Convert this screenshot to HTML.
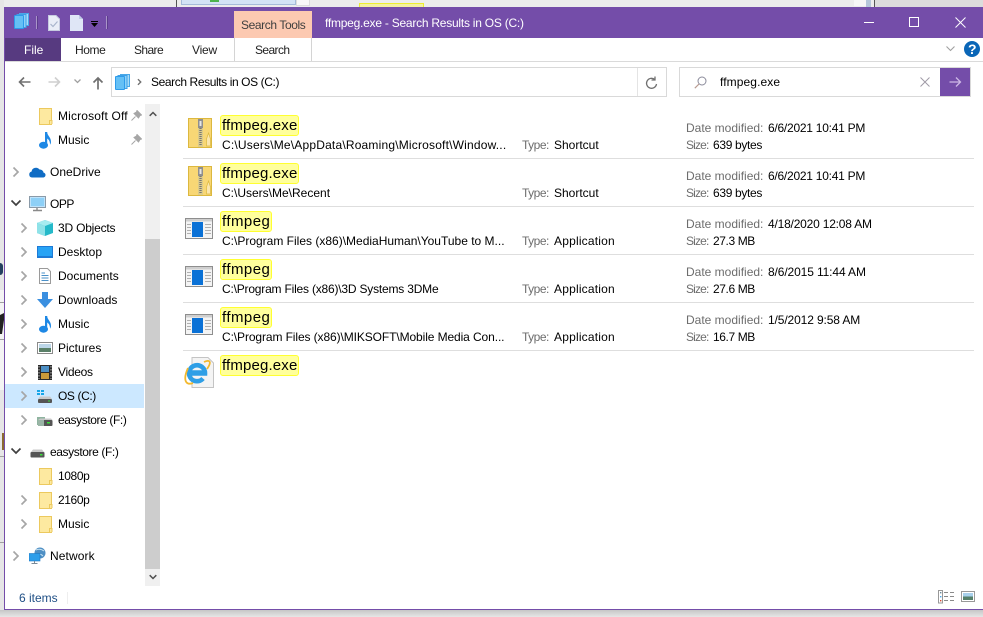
<!DOCTYPE html>
<html><head><meta charset="utf-8"><style>
html,body{margin:0;padding:0}
body{width:983px;height:617px;position:relative;overflow:hidden;background:#fff;font:12px/16px "Liberation Sans",sans-serif;color:#000}
div,span.t,svg{position:absolute}
.t{position:absolute;white-space:nowrap;line-height:16px}
.g{color:#6d6d6d}
.s4{letter-spacing:-.4px}
.s5{letter-spacing:-.5px}
.s2{letter-spacing:-.2px}
.sz{letter-spacing:-.85px}
.hl{position:absolute;left:220px;height:19px;background:#ffff9c;border:1px solid #ffff30;border-radius:3px;box-sizing:content-box}
.n{position:absolute;left:222px;font-size:15px;line-height:20px;white-space:nowrap;letter-spacing:.15px}
.n2{letter-spacing:.45px}
.sep{position:absolute;left:183px;width:791px;height:1px;background:#dedede}
</style></head><body>
<svg width="0" height="0" style="position:absolute"><defs>
<symbol id="ch" viewBox="0 0 8 12"><path d="M1.5 1.5L6 6L1.5 10.5" fill="none" stroke="#a6a6a6" stroke-width="1.7"/></symbol>
<symbol id="dn" viewBox="0 0 12 8"><path d="M1.5 1.5L6 6L10.5 1.5" fill="none" stroke="#404040" stroke-width="1.7"/></symbol>
<symbol id="fo" viewBox="0 0 14 17"><path d="M.5.5H12.5V16.5H.5Z" fill="#fde9a0" stroke="#ecc95e"/><path d="M10.5 16V12.5H13V16" fill="#fde9a0" stroke="#ecc95e"/></symbol>
<symbol id="mu" viewBox="0 0 12 17"><ellipse cx="4.5" cy="13.2" rx="4.5" ry="3.5" fill="#1e88e5"/><path d="M6 0H8.2V13.5H6Z" fill="#1e88e5"/><path d="M8 0C8.5 4 12 5 12 10C12 11 11.6 12 11 12.6C11 9.5 10 7.5 8 6.5Z" fill="#1e88e5"/></symbol>
<symbol id="zip" viewBox="0 0 24 30"><path d="M.5.5H23.5V29.5H.5Z" fill="#f8d775" stroke="#dcb83f"/><path d="M10 1H15V29H10Z" fill="#dccb8a"/><path d="M10 1H15V10H10Z" fill="#8f8f8f"/><path d="M11.5 3H13.5V8H11.5Z" fill="#e6e6e6"/><path d="M12.5 10V28" stroke="#777" stroke-width="2.4" stroke-dasharray="1 1"/><path d="M20.5 15L22.5 21V28H18.5V21Z" fill="#fbe6ae" stroke="#dcb83f" stroke-width=".7"/></symbol>
<symbol id="app" viewBox="0 0 28 22"><rect x=".5" y=".5" width="27" height="20" fill="#f4f4f4" stroke="#8e8e8e"/><rect x="1" y="1" width="26" height="2.5" fill="#cfcfcf"/><rect x="7" y="4" width="11" height="15" fill="#0a71d6"/><path d="M2 6.5H6M2 9.5H6M2 12.5H6M2 15.5H6M20 6.5H26M20 9.5H26M20 12.5H26M20 15.5H26" stroke="#b0b0b0"/></symbol>
<symbol id="stack" viewBox="0 0 15 16"><rect x="5.5" y=".5" width="9" height="12" fill="#a6dcf9" stroke="#4aa8e8"/><rect x="3" y="1.5" width="9" height="13" fill="#8ed2f8" stroke="#3ea0e6"/><rect x=".5" y="2.5" width="9" height="13" rx=".5" fill="#65c0f5" stroke="#2e9bea"/></symbol>
</defs></svg>

<!-- background strip -->
<div style="left:0;top:0;width:983px;height:7px;background:#ececec"></div>
<div style="left:176px;top:0;width:1px;height:7px;background:#555"></div>
<div style="left:181px;top:0;width:115px;height:5px;background:#d3e3f5;border:1px solid #a5bcd9;border-top:0;box-sizing:border-box"></div>
<div style="left:210px;top:0;width:9px;height:2px;background:#4db34d"></div>
<div style="left:296px;top:0;width:14px;height:6px;background:#f8f8f8;border:1px solid #ddd;border-top:0;box-sizing:border-box"></div>
<div style="left:359px;top:3px;width:65px;height:4px;background:#f3f0a0;border:1px solid #ecec30;border-bottom:0;box-sizing:border-box"></div>
<div style="left:854px;top:0;width:12px;height:6px;background:#f6f6f6"></div>
<div style="left:866px;top:0;width:5px;height:7px;background:#b5c6da"></div>
<div style="left:874px;top:0;width:1px;height:7px;background:#555"></div>
<div style="left:875px;top:0;width:108px;height:7px;background:#dcdcdc"></div>
<div style="left:0;top:0;width:4px;height:617px;background:#e6e6e6"></div>
<div style="left:0;top:290px;width:4px;height:100px;background:#f4f4f4"></div>
<div style="left:0;top:302px;width:4px;height:1px;background:#a0a0a0"></div>
<div style="left:0;top:339px;width:4px;height:1px;background:#a0a0a0"></div>
<div style="left:0;top:456px;width:4px;height:1px;background:#a0a0a0"></div>
<div style="left:0;top:542px;width:4px;height:1px;background:#a0a0a0"></div>
<div style="left:0;top:263px;width:3px;height:12px;background:#24405f;border-radius:0 4px 4px 0"></div>
<svg style="left:0;top:313px" width="4" height="22" viewBox="0 0 4 22"><path d="M0 2L4 0V7L2 21H0Z" fill="#222"/></svg>
<div style="left:2px;top:433px;width:2px;height:17px;background:#8a6a30"></div>
<div style="left:0;top:610px;width:983px;height:7px;background:linear-gradient(#c6c6c6,#e6e6e6)"></div>

<!-- window -->
<div style="left:4px;top:7px;width:979px;height:603px;background:#fff;border-left:1px solid #744da9;border-bottom:1px solid #744da9;box-sizing:border-box"></div>
<div style="left:4px;top:7px;width:979px;height:31px;background:#744da9"></div>

<!-- title bar -->
<svg style="left:14px;top:13px" width="15" height="16"><use href="#stack"/></svg>
<div style="left:36px;top:16px;width:1px;height:13px;background:#a994c8;border-right:1px solid #5c3c8c"></div>
<svg style="left:48px;top:15px" width="12" height="16" viewBox="0 0 12 16"><path d="M.5.5H8L11.5 4V15.5H.5Z" fill="#e9edf7" stroke="#c6cbe0"/><path d="M2.5 9L5 11.5L9.5 6.5" fill="none" stroke="#a8b4cc" stroke-width="1.2"/></svg>
<svg style="left:70px;top:15px" width="13" height="16" viewBox="0 0 13 16"><path d="M0 0H9L13 4V16H0Z" fill="#dfe6f6"/><path d="M9 0V4H13Z" fill="#bfcbe6"/></svg>
<div style="left:91px;top:21px;width:7px;height:1px;background:#000"></div>
<svg style="left:91px;top:23px" width="7" height="4"><path d="M0 0H7L3.5 4Z" fill="#000"/></svg>
<div style="left:106px;top:16px;width:1px;height:13px;background:#a994c8;border-right:1px solid #5c3c8c"></div>
<div style="left:234px;top:11px;width:78px;height:27px;background:#fcc9b1"></div>
<span class="t s4" style="left:241px;top:17px;color:#3f3f3f">Search Tools</span>
<span class="t" style="left:325px;top:15px;color:#fff;letter-spacing:-.24px">ffmpeg.exe - Search Results in OS (C:)</span>
<div style="left:864px;top:22px;width:10px;height:1px;background:#fff"></div>
<div style="left:909px;top:17px;border:1px solid #fff;width:8px;height:8px"></div>
<svg style="left:955px;top:17px" width="11" height="11"><path d="M.5.5L10.5 10.5M10.5.5L.5 10.5" stroke="#fff" fill="none"/></svg>

<!-- ribbon tabs -->
<div style="left:5px;top:38px;width:56px;height:23px;background:#573a80"></div>
<span class="t" style="left:24px;top:42px;color:#fff">File</span>
<span class="t s4" style="left:75px;top:42px;color:#222">Home</span>
<span class="t" style="left:134px;top:42px;color:#222;letter-spacing:-.6px">Share</span>
<span class="t s2" style="left:192px;top:42px;color:#222">View</span>
<div style="left:234px;top:38px;width:78px;height:23px;border-left:1px solid #d4d4d4;border-right:1px solid #d4d4d4;box-sizing:border-box"></div>
<span class="t" style="left:255px;top:42px;color:#222;letter-spacing:-.6px">Search</span>
<div style="left:5px;top:61px;width:978px;height:1px;background:#dadada"></div>
<svg style="left:946px;top:46px" width="9" height="6"><path d="M.5.5L4.5 4.5L8.5.5" stroke="#a0a0a0" fill="none" stroke-width="1.1"/></svg>
<div style="left:964px;top:41px;width:16px;height:16px;border-radius:50%;background:#0a66b7"></div>
<span class="t" style="left:968px;top:41px;color:#fff;font-weight:bold;font-size:14px">?</span>

<!-- nav -->
<svg style="left:18px;top:76px" width="13" height="12"><path d="M12.5 6H1.5M6 1.5L1.5 6L6 10.5" stroke="#707070" fill="none" stroke-width="1.6"/></svg>
<svg style="left:48px;top:76px" width="13" height="12"><path d="M.5 6H11.5M7 1.5L11.5 6L7 10.5" stroke="#cfcfcf" fill="none" stroke-width="1.6"/></svg>
<svg style="left:74px;top:79px" width="7" height="5"><path d="M.5.5L3.5 3.5L6.5.5" stroke="#a0a0a0" fill="none" stroke-width="1.3"/></svg>
<svg style="left:92px;top:76px" width="12" height="14"><path d="M6 13.5V2M1.5 6.5L6 2L10.5 6.5" stroke="#707070" fill="none" stroke-width="1.7"/></svg>
<div style="left:111px;top:67px;width:556px;height:30px;border:1px solid #d9d9d9;box-sizing:border-box"></div>
<svg style="left:115px;top:74px" width="15" height="16"><use href="#stack"/></svg>
<svg style="left:137px;top:78px" width="5" height="8" viewBox="0 0 8 12"><path d="M1.5 1.5L6 6L1.5 10.5" fill="none" stroke="#707070" stroke-width="2.2"/></svg>
<span class="t s4" style="left:151px;top:74px">Search Results in OS (C:)</span>
<div style="left:637px;top:68px;width:1px;height:28px;background:#e4e4e4"></div>
<svg style="left:645px;top:76px" width="13" height="14"><path d="M9.8 3.5A5 5 0 1 0 11.5 8M10 .5V4H6.5" stroke="#707070" fill="none" stroke-width="1.3"/></svg>
<div style="left:679px;top:67px;width:292px;height:30px;border:1px solid #d9d9d9;box-sizing:border-box"></div>
<svg style="left:694px;top:76px" width="13" height="13"><circle cx="8" cy="5" r="4" fill="none" stroke="#8a8a9a"/><path d="M5 8L.8 12.2" stroke="#b89a90" stroke-width="1.2"/></svg>
<span class="t" style="left:720px;top:74px;letter-spacing:.1px">ffmpeg.exe</span>
<svg style="left:920px;top:77px" width="10" height="10"><path d="M.5.5L9.5 9.5M9.5.5L.5 9.5" stroke="#a09aa6" fill="none"/></svg>
<div style="left:940px;top:68px;width:30px;height:28px;background:#744da9"></div>
<svg style="left:949px;top:76px" width="13" height="12"><path d="M.5 6H11.5M7 1.5L11.5 6L7 10.5" stroke="#cdb8e6" fill="none" stroke-width="1.3"/></svg>

<!-- nav pane -->
<div style="left:5px;top:384px;width:139px;height:24px;background:#cce8ff"></div>

<svg style="left:39px;top:108px" width="14" height="17"><use href="#fo"/></svg>
<span class="t" style="left:58px;top:108px;width:70px;overflow:hidden;letter-spacing:.15px">Microsoft Office</span>
<svg style="left:131px;top:110px" width="11" height="11" viewBox="0 0 11 11"><path d="M6 .5L10.5 5L9 5.5L7.5 8L3 3.5L5.5 2ZM4.5 6.5L.5 10.5" fill="#a6a6a6" stroke="#a6a6a6"/></svg>
<svg style="left:39px;top:132px" width="12" height="17"><use href="#mu"/></svg>
<span class="t" style="left:58px;top:132px">Music</span>
<svg style="left:131px;top:134px" width="11" height="11" viewBox="0 0 11 11"><path d="M6 .5L10.5 5L9 5.5L7.5 8L3 3.5L5.5 2ZM4.5 6.5L.5 10.5" fill="#a6a6a6" stroke="#a6a6a6"/></svg>

<svg style="left:12px;top:166px" width="8" height="12"><use href="#ch"/></svg>
<svg style="left:29px;top:166px" width="17" height="12" viewBox="0 0 17 12"><path d="M3 11.5A3 3 0 0 1 2.5 5.6A4.5 4.5 0 0 1 10.5 3.5A3.6 3.6 0 0 1 14.5 6.6A2.5 2.5 0 0 1 14.5 11.5Z" fill="#0f6cc4"/></svg>
<span class="t" style="left:50px;top:164px">OneDrive</span>

<svg style="left:10px;top:199px" width="12" height="8"><use href="#dn"/></svg>
<svg style="left:29px;top:196px" width="17" height="16" viewBox="0 0 17 16"><rect x=".5" y=".5" width="16" height="11" fill="#bfe3fb" stroke="#8a9aa8"/><rect x="2" y="2" width="13" height="8" fill="#8ed0f7"/><path d="M8 12V14M4 14.5H13" stroke="#8a8a8a" stroke-width="1.4"/></svg>
<span class="t s5" style="left:50px;top:196px">OPP</span>

<svg style="left:20px;top:222px" width="8" height="12"><use href="#ch"/></svg>
<svg style="left:37px;top:220px" width="16" height="16" viewBox="0 0 16 16"><path d="M8 0L16 3V13L8 16L0 13V3Z" fill="#25b9c9"/><path d="M0 3L8 6L16 3L8 0Z" fill="#a7ecf0"/><path d="M0 3L8 6V16L0 13Z" fill="#8fe2e8"/></svg>
<span class="t s2" style="left:58px;top:220px">3D Objects</span>

<svg style="left:20px;top:246px" width="8" height="12"><use href="#ch"/></svg>
<svg style="left:37px;top:246px" width="16" height="12" viewBox="0 0 16 12"><rect width="16" height="12" fill="#1d7ad6"/><rect x="1" y="1" width="14" height="9" fill="#27a3f5"/></svg>
<span class="t" style="left:58px;top:244px">Desktop</span>

<svg style="left:20px;top:270px" width="8" height="12"><use href="#ch"/></svg>
<svg style="left:39px;top:268px" width="12" height="16" viewBox="0 0 12 16"><path d="M.5.5H8.5L11.5 3.5V15.5H.5Z" fill="#fff" stroke="#9a9a9a"/><path d="M2.5 5H6M2.5 7.5H9.5M2.5 10H9.5M2.5 12.5H9.5" stroke="#4a90c8"/></svg>
<span class="t" style="left:58px;top:268px">Documents</span>

<svg style="left:20px;top:294px" width="8" height="12"><use href="#ch"/></svg>
<svg style="left:37px;top:292px" width="16" height="16" viewBox="0 0 16 16"><path d="M5 0H11V7H16L8 16L0 7H5Z" fill="#3a8fe0"/></svg>
<span class="t" style="left:58px;top:292px">Downloads</span>

<svg style="left:20px;top:318px" width="8" height="12"><use href="#ch"/></svg>
<svg style="left:39px;top:316px" width="12" height="17"><use href="#mu"/></svg>
<span class="t" style="left:58px;top:316px">Music</span>

<svg style="left:20px;top:342px" width="8" height="12"><use href="#ch"/></svg>
<svg style="left:37px;top:342px" width="16" height="12" viewBox="0 0 16 12"><rect x=".5" y=".5" width="15" height="11" fill="#fff" stroke="#8a8a8a"/><rect x="2" y="2" width="12" height="4" fill="#bcd6e8"/><rect x="2" y="6" width="12" height="4" fill="#5a8068"/></svg>
<span class="t" style="left:58px;top:340px">Pictures</span>

<svg style="left:20px;top:366px" width="8" height="12"><use href="#ch"/></svg>
<svg style="left:38px;top:365px" width="14" height="15" viewBox="0 0 14 15"><rect width="14" height="15" fill="#2a2a2a"/><rect x="3" y="1" width="8" height="6" fill="#4c8fc4"/><rect x="3" y="8" width="8" height="6" fill="#c99a3a"/><path d="M1 1V14M13 1V14" stroke="#bbb" stroke-dasharray="1.5 1.5"/></svg>
<span class="t" style="left:58px;top:364px;letter-spacing:-.3px">Videos</span>

<svg style="left:20px;top:390px" width="8" height="12"><use href="#ch"/></svg>
<svg style="left:37px;top:390px" width="16" height="14" viewBox="0 0 16 14"><path d="M0 0H3V2H0ZM4 0H7V2H4ZM0 3H3V5H0ZM4 3H7V5H4Z" fill="#17a6e8"/><path d="M1 9L3 6.5H13L15 9Z" fill="#c8c8c8"/><rect x="1" y="9" width="14" height="4" rx="1" fill="#555"/><rect x="11" y="10.5" width="2" height="1" fill="#3ae03a"/></svg>
<span class="t s4" style="left:58px;top:388px">OS (C:)</span>

<svg style="left:20px;top:414px" width="8" height="12"><use href="#ch"/></svg>
<svg style="left:37px;top:414px" width="16" height="14" viewBox="0 0 16 14"><rect x="0" y="3" width="8" height="8" fill="#8fb4a0"/><path d="M1 6L3 4.5H14L15.5 6Z" fill="#c8c8c8"/><rect x="1" y="6" width="14.5" height="6" rx="1" fill="#555"/><rect x="10" y="8" width="3" height="1.5" fill="#3ae03a"/><rect x="1" y="6" width="6" height="6" fill="#9ab5a6"/></svg>
<span class="t s4" style="left:58px;top:412px">easystore (F:)</span>

<svg style="left:10px;top:447px" width="12" height="8"><use href="#dn"/></svg>
<svg style="left:30px;top:449px" width="15" height="9" viewBox="0 0 15 9"><path d="M1 3L3 .5H12L14 3Z" fill="#c8c8c8"/><rect x=".5" y="3" width="14" height="5.5" rx="1" fill="#555"/><rect x="10" y="5" width="2.5" height="1.5" fill="#3ae03a"/></svg>
<span class="t s4" style="left:50px;top:444px">easystore (F:)</span>

<svg style="left:39px;top:468px" width="14" height="17"><use href="#fo"/></svg>
<span class="t s4" style="left:58px;top:468px">1080p</span>
<svg style="left:20px;top:494px" width="8" height="12"><use href="#ch"/></svg>
<svg style="left:39px;top:492px" width="14" height="17"><use href="#fo"/></svg>
<span class="t s4" style="left:58px;top:492px">2160p</span>
<svg style="left:20px;top:518px" width="8" height="12"><use href="#ch"/></svg>
<svg style="left:39px;top:516px" width="14" height="17"><use href="#fo"/></svg>
<span class="t" style="left:58px;top:516px">Music</span>

<svg style="left:12px;top:550px" width="8" height="12"><use href="#ch"/></svg>
<svg style="left:29px;top:547px" width="17" height="17" viewBox="0 0 17 17"><circle cx="11" cy="6" r="5.5" fill="#4f8fc4"/><path d="M7 3Q11 1 15 4M8 8Q11 6 14 9" stroke="#c6e2f2" fill="none"/><rect x="0" y="6.5" width="11" height="7.5" fill="#2e9eea" stroke="#1b78c4" stroke-width=".6"/><path d="M5.5 14V16M2.5 16.5H8.5" stroke="#7a8a98"/></svg>
<span class="t" style="left:50px;top:548px;letter-spacing:.1px">Network</span>

<!-- scrollbar -->
<div style="left:145px;top:104px;width:15px;height:482px;background:#f0f0f0"></div>
<div style="left:145px;top:239px;width:15px;height:330px;background:#cdcdcd"></div>
<svg style="left:149px;top:111px" width="8" height="6"><path d="M.7 4.8L4 1.5L7.3 4.8" stroke="#505050" stroke-width="1.5" fill="none"/></svg>
<svg style="left:149px;top:574px" width="8" height="6"><path d="M.7 1.2L4 4.5L7.3 1.2" stroke="#505050" stroke-width="1.5" fill="none"/></svg>

<!-- results -->
<svg style="left:188px;top:118px" width="24" height="30"><use href="#zip"/></svg>
<div class="hl" style="top:115px;width:77px"></div><span class="n" style="top:116px">ffmpeg.exe</span>
<span class="t" style="left:222px;top:137px;letter-spacing:.19px">C:\Users\Me\AppData\Roaming\Microsoft\Window...</span>
<span class="t g s5" style="left:522px;top:137px">Type:</span><span class="t" style="left:554px;top:137px">Shortcut</span>
<span class="t g" style="left:686px;top:120px">Date modified:</span><span class="t" style="left:768px;top:120px;letter-spacing:-.25px">6/6/2021 10:41 PM</span>
<span class="t g sz" style="left:686px;top:137px">Size:</span><span class="t" style="left:713px;top:137px;letter-spacing:-.33px">639 bytes</span>
<div class="sep" style="top:158px"></div>

<svg style="left:188px;top:166px" width="24" height="30"><use href="#zip"/></svg>
<div class="hl" style="top:163px;width:77px"></div><span class="n" style="top:164px">ffmpeg.exe</span>
<span class="t" style="left:222px;top:185px">C:\Users\Me\Recent</span>
<span class="t g s5" style="left:522px;top:185px">Type:</span><span class="t" style="left:554px;top:185px">Shortcut</span>
<span class="t g" style="left:686px;top:168px">Date modified:</span><span class="t" style="left:768px;top:168px;letter-spacing:-.25px">6/6/2021 10:41 PM</span>
<span class="t g sz" style="left:686px;top:185px">Size:</span><span class="t" style="left:713px;top:185px;letter-spacing:-.33px">639 bytes</span>
<div class="sep" style="top:206px"></div>

<svg style="left:185px;top:218px" width="28" height="22"><use href="#app"/></svg>
<div class="hl" style="top:211px;width:50px"></div><span class="n n2" style="top:212px">ffmpeg</span>
<span class="t" style="left:222px;top:233px">C:\Program Files (x86)\MediaHuman\YouTube to M...</span>
<span class="t g s5" style="left:522px;top:233px">Type:</span><span class="t" style="left:554px;top:233px;letter-spacing:.2px">Application</span>
<span class="t g" style="left:686px;top:216px">Date modified:</span><span class="t s2" style="left:768px;top:216px">4/18/2020 12:08 AM</span>
<span class="t g sz" style="left:686px;top:233px">Size:</span><span class="t s4" style="left:713px;top:233px">27.3 MB</span>
<div class="sep" style="top:254px"></div>

<svg style="left:185px;top:266px" width="28" height="22"><use href="#app"/></svg>
<div class="hl" style="top:259px;width:50px"></div><span class="n n2" style="top:260px">ffmpeg</span>
<span class="t s2" style="left:222px;top:281px">C:\Program Files (x86)\3D Systems 3DMe</span>
<span class="t g s5" style="left:522px;top:281px">Type:</span><span class="t" style="left:554px;top:281px;letter-spacing:.2px">Application</span>
<span class="t g" style="left:686px;top:264px">Date modified:</span><span class="t" style="left:768px;top:264px;letter-spacing:-.12px">8/6/2015 11:44 AM</span>
<span class="t g sz" style="left:686px;top:281px">Size:</span><span class="t s4" style="left:713px;top:281px">27.6 MB</span>
<div class="sep" style="top:302px"></div>

<svg style="left:185px;top:314px" width="28" height="22"><use href="#app"/></svg>
<div class="hl" style="top:307px;width:50px"></div><span class="n n2" style="top:308px">ffmpeg</span>
<span class="t" style="left:222px;top:329px;letter-spacing:-.1px">C:\Program Files (x86)\MIKSOFT\Mobile Media Con...</span>
<span class="t g s5" style="left:522px;top:329px">Type:</span><span class="t" style="left:554px;top:329px;letter-spacing:.2px">Application</span>
<span class="t g" style="left:686px;top:312px">Date modified:</span><span class="t" style="left:768px;top:312px;letter-spacing:-.12px">1/5/2012 9:58 AM</span>
<span class="t g sz" style="left:686px;top:329px">Size:</span><span class="t s4" style="left:713px;top:329px">16.7 MB</span>
<div class="sep" style="top:350px"></div>

<svg style="left:184px;top:357px" width="31" height="32" viewBox="0 0 31 32"><path d="M8 .5H24L29.5 6V30.5H8Z" fill="#f4f4f4" stroke="#c4c4c4"/><path d="M5 16.5H21A8 8 0 1 0 19 21.5" fill="none" stroke="#2f9fe6" stroke-width="4.6"/><path d="M6 14H20" stroke="#2f9fe6" stroke-width="1.5"/><path d="M20 5C26 2 28 5 23 12M4 11C-1 22 1 29 9 26" fill="none" stroke="#f2b82e" stroke-width="1.8"/></svg>
<div class="hl" style="top:355px;width:77px"></div><span class="n" style="top:356px">ffmpeg.exe</span>

<!-- status bar -->
<span class="t" style="left:19px;top:590px;color:#1f4f85">6 items</span>
<div style="left:67px;top:592px;width:1px;height:12px;background:#eee"></div>
<svg style="left:938px;top:590px" width="17" height="14" viewBox="0 0 17 14"><rect x=".5" y=".5" width="4" height="12.5" fill="#fff" stroke="#999"/><rect x="2" y="2" width="1.4" height="1.4" fill="#6a8a9a"/><rect x="2" y="6" width="1.4" height="1.4" fill="#4aa8e8"/><rect x="2" y="10" width="1.4" height="1.4" fill="#d84a30"/><path d="M6 2.5H10M12 2.5H16M6 6.5H10M12 6.5H16M6 10.5H10M12 10.5H16" stroke="#8a8a8a" stroke-width="1.1"/></svg>
<svg style="left:961px;top:591px" width="14" height="11" viewBox="0 0 14 11"><rect x=".5" y=".5" width="13" height="10" fill="#fff" stroke="#999"/><rect x="2" y="2" width="10" height="3.5" fill="#a8d0ec"/><rect x="2" y="5.5" width="10" height="3.5" fill="#55806a"/></svg>
</body></html>
